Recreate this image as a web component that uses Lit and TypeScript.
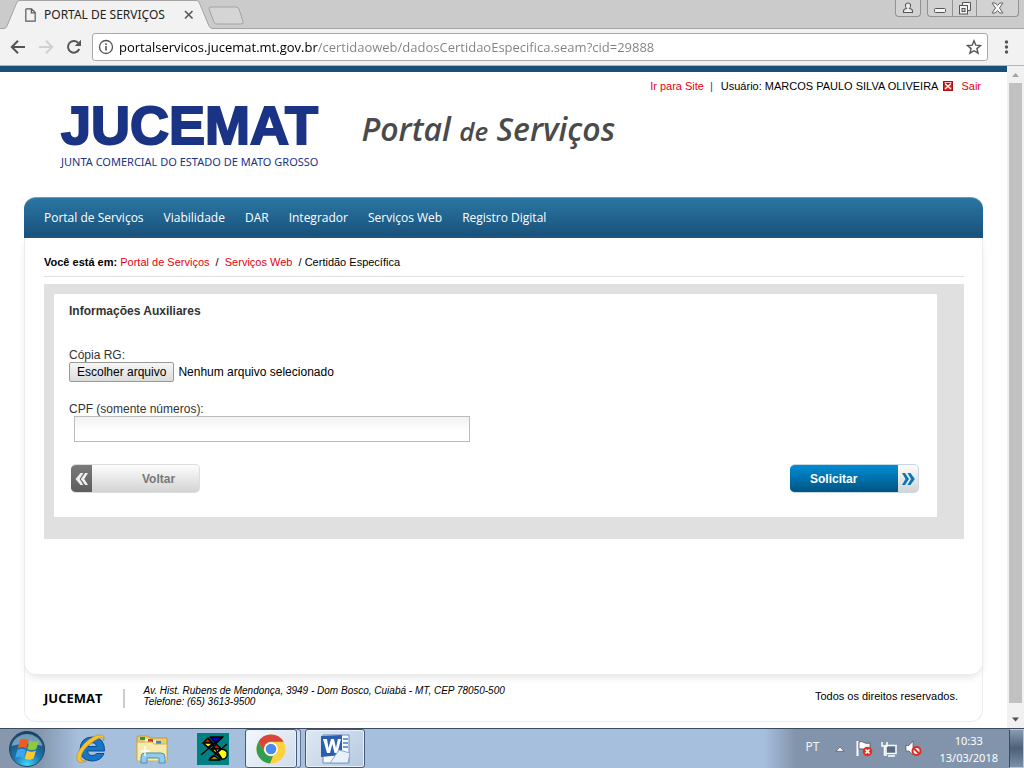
import { LitElement, html, css, svg } from "lit";
import { customElement, query, state } from "lit/decorators.js";

@customElement("browser-bar")
class BrowserBar extends LitElement {
  static styles = css`
    :host { display: block; font-family: "Open Sans", "Noto Sans", sans-serif; }
    button { border: 0; background: none; padding: 0; margin: 0; display: block; }
    svg { display: block; }
    .strip { height: 28px; background: #cbcbcb; border-bottom: 1px solid #a3a3a3; display: flex; justify-content: space-between; }
    .tabs { display: flex; }
    .tab { width: 212px; height: 29px; position: relative; display: flex; align-items: center; padding: 0 18px 0 25px; box-sizing: border-box; }
    .tab .shape { position: absolute; left: 0; top: 0; }
    .tab > * { position: relative; }
    .tab .name { font-size: 12px; line-height: 16px; color: #222; flex: 1; padding: 0 0 0 8px; white-space: nowrap; font-family: "Noto Sans", sans-serif; }
    .win { display: flex; padding-right: 5px; gap: 6px; }
    .group { display: flex; height: 16px; border: 1px solid #929292; border-top: 0; border-radius: 0 0 4px 4px; background: #d2d2d2; }
    .group button { height: 16px; width: 24px; display: flex; justify-content: center; align-items: center; }
    .group button + button { border-left: 1px solid #929292; }
    .group .wide { width: 42px; }
    .bar { height: 36px; background: #f2f2f2; border-bottom: 1px solid #b4b4b4; display: flex; align-items: center; padding: 0 15px 0 8px; gap: 8px; }
    .tools { display: flex; gap: 8px; }
    .menu { margin-left: 5px; }
    .omni { flex: 1; height: 26px; border: 1px solid #a9a9a9; border-radius: 3px; background: #fff; display: flex; align-items: center; padding: 0 5px; gap: 5px; }
    .url { flex: 1; min-width: 0; border: 0; outline: 0; padding: 0; height: 24px; font: 13px/24px "Open Sans", sans-serif; color: #111;
      background: linear-gradient(to right, #000 199px, #808080 199px); background-clip: text; -webkit-background-clip: text; -webkit-text-fill-color: transparent; }
  `;
  render() {
    return html`
      <div class="strip">
        <div class="tabs">
          <div class="tab">
            <svg class="shape" width="246" height="29" viewBox="0 0 246 29">
              <path d="M209 9 q-.5-2 2-2 h25 q2 0 3 2 l4 12.500 q1 2.500-2 2.500 h-24 q-2 0-3-2z" fill="#d5d5d5" stroke="#a3a3a3"/>
              <path d="M0 29 V28.500 H4 Q6 28.500 7 26 L17 2 Q18 .5 20 .5 H196 Q198 .5 199 2 L209 26 Q210 28.500 213 28.500 V29Z" fill="#f2f2f2"/>
              <path d="M0 28.500 H4 Q6 28.500 7 26 L17 2 Q18 .5 20 .5 H196 Q198 .5 199 2 L209 26 Q210 28.500 213 28.500" fill="none" stroke="#a3a3a3"/>
            </svg>
            <svg width="11" height="14" viewBox="0 0 11 14"><path d="M1 .8h5.500L10.200 4.500V13.200H.8V.8M6.300 1v3.800H10" fill="none" stroke="#5a5a5a" stroke-width="1.200"/></svg>
            <span class="name">PORTAL DE SERVIÇOS</span>
            <button aria-label="Fechar guia"><svg width="10" height="10" viewBox="0 0 10 10"><path d="M1 1l7.500 7.500M8.500 1L1 8.500" stroke="#5a5a5a" stroke-width="1.700"/></svg></button>
          </div>
        </div>
        <div class="win">
          <div class="group"><button aria-label="Perfil"><svg width="12" height="12" viewBox="0 0 12 12"><path d="M1.500 10.500V9q0-2 3-2.500Q3 4.500 3.500 2.500 4.300 1 6 1t2.500 1.500Q9 4.500 7.500 6.500q3 .5 3 2.500v1.500z" fill="#eee" stroke="#555" stroke-width="1.100"/></svg></button></div>
          <div class="group">
            <button aria-label="Minimizar"><svg width="12" height="12" viewBox="0 0 12 12"><rect x=".5" y="6.500" width="11" height="4" rx="1" fill="#f4f4f4" stroke="#555"/></svg></button>
            <button aria-label="Restaurar"><svg width="14" height="13" viewBox="0 0 14 13"><path d="M4.500 3V.5h8v8H10" fill="#f4f4f4" stroke="#555"/><rect x="1.500" y="3.500" width="8" height="8.500" fill="#f4f4f4" stroke="#555"/><rect x="4" y="6.500" width="3" height="3" fill="#d0d0d0" stroke="#555"/></svg></button>
            <button class="wide" aria-label="Fechar"><svg width="13" height="12" viewBox="0 0 13 12"><path d="M1 1h3.300L6.500 3.500 8.700 1H12L8.500 6 12 11H8.700L6.500 8.500 4.300 11H1L4.500 6z" fill="#f4f4f4" stroke="#666"/></svg></button>
          </div>
        </div>
      </div>
      <div class="bar">
        <div class="tools">
          <button aria-label="Voltar"><svg width="20" height="20" viewBox="0 0 20 20"><path d="M17 10H4M10 3.800L3.800 10 10 16.200" fill="none" stroke="#555" stroke-width="2"/></svg></button>
          <button aria-label="Avançar"><svg width="20" height="20" viewBox="0 0 20 20"><path d="M3 10h13M10 3.800L16.200 10 10 16.200" fill="none" stroke="#d0d0d0" stroke-width="2"/></svg></button>
          <button aria-label="Recarregar"><svg width="20" height="20" viewBox="0 0 20 20"><path d="M15.200 12A5.800 5.800 0 1 1 14 5.800" fill="none" stroke="#555" stroke-width="2"/><path d="M17 2.800V9h-6.200z" fill="#555"/></svg></button>
        </div>
        <div class="omni">
          <svg width="16" height="16" viewBox="0 0 16 16"><circle cx="8" cy="8" r="6.500" fill="none" stroke="#555" stroke-width="1.300"/><path d="M8 7v4.500M8 4.300v1.600" stroke="#555" stroke-width="1.600"/></svg>
          <input class="url" aria-label="Endereço" spellcheck="false" .value=${"portalservicos.jucemat.mt.gov.br/certidaoweb/dadosCertidaoEspecifica.seam?cid=29888"}>
          <button aria-label="Favoritos"><svg width="16" height="16" viewBox="0 0 16 16"><path d="M8 1.800l1.800 4.400 4.700.4-3.600 3 1.200 4.600L8 11.700l-4.100 2.500 1.200-4.600-3.600-3 4.700-.4z" fill="none" stroke="#555" stroke-width="1.400"/></svg></button>
        </div>
        <button class="menu" aria-label="Menu"><svg width="8" height="16" viewBox="0 0 8 16"><g fill="#555"><circle cx="5.500" cy="3" r="1.700"/><circle cx="5.500" cy="8" r="1.700"/><circle cx="5.500" cy="13" r="1.700"/></g></svg></button>
      </div>`;
  }
}

@customElement("portal-page")
class PortalPage extends LitElement {
  @state() fileName = "Nenhum arquivo selecionado";
  @query("#rg") fileInput!: HTMLInputElement;

  static styles = css`
    :host { display: flex; flex-direction: column; background: #fff; border-top: 6px solid #18507a; font-family: "Liberation Sans", Arial, sans-serif; color: #000; font-size: 11px; padding: 0 24px 6px; }
    a { color: #e60012; text-decoration: none; }
    header { height: 125px; }
    .session { display: flex; justify-content: flex-end; align-items: center; line-height: 14px; padding: 7px 2px 0 0; white-space: pre; }
    .pipe { color: #18507a; padding: 0 8px 0 6px; }
    .session svg { margin: 0 8px 0 5px; }
    .brand { display: flex; align-items: flex-start; padding: 2px 0 0 37px; gap: 43px; }
    .logo { color: #1a3384; }
    .logo b { display: block; font-size: 54px; line-height: 60px; -webkit-text-stroke: 2px #1a3384; }
    .logo span { display: block; font: 11px/14px "Noto Sans", sans-serif; white-space: nowrap; -webkit-text-stroke: 0; }
    h1 { margin: 0; padding-top: 12px; font: italic 600 32px/44px "Open Sans", sans-serif; color: #4a4a4a; white-space: nowrap; }
    h1 small { font-size: 26px; }
    nav { min-height: 40px; border-top: 1px solid #6d9dbb; border-radius: 12px 12px 0 0; background: linear-gradient(#2b76a3, #18507a); display: flex; align-items: center; gap: 20px; padding: 0 20px; }
    nav a { color: #fff; font: 12px/18px "Open Sans", sans-serif; }
    .body { flex: 1; border: solid #ececec; border-width: 0 1px 1px; border-radius: 0 0 12px 12px; padding: 17px 18px 0 19px; box-shadow: 0 4px 10px -3px #ddd; position: relative; background: #fff; }
    .crumbs { line-height: 14px; padding-bottom: 7px; border-bottom: 1px solid #e0e0e0; white-space: pre; }
    .box { margin-top: 7px; background: #e0e0e0; padding: 10px 27px 22px 10px; }
    form { background: #fff; padding: 9px 18px 24px 15px; font-size: 12px; line-height: 16px; color: #333; }
    h2 { font-size: 12px; line-height: 16px; margin: 0 0 29px; color: #333; }
    .field { display: block; line-height: 14px; }
    .file { display: flex; align-items: center; gap: 4px; color: #000; margin-bottom: 20px; }
    .file input { position: absolute; opacity: 0; width: 1px; height: 1px; }
    .file button { font: 12px/14px "Liberation Sans", sans-serif; color: #000; height: 20px; padding: 0 7px 1px; border: 1px solid #9a9a9a; border-radius: 2px; background: linear-gradient(#f6f6f6, #dcdcdc); }
    .cpf { display: block; box-sizing: border-box; margin-left: 5px; width: 396px; max-width: 100%; height: 26px; border: 1px solid #bbb; background: linear-gradient(#f2f2f2, #fff 60%); padding: 0 6px; font: 12px "Liberation Sans", sans-serif; outline: 0; }
    .actions { display: flex; justify-content: space-between; margin-top: 22px; padding-left: 2px; }
    .act { width: 129px; height: 29px; display: flex; align-items: stretch; padding: 0; border: 1px solid #ddd; border-radius: 5px; overflow: hidden; font: bold 12px "Liberation Sans", sans-serif; background: linear-gradient(#fdfdfd, #d3d3d3); }
    .act span { flex: 1; display: flex; align-items: center; }
    .act svg { display: block; }
    .back { color: #777; border-left-width: 0; }
    .back .ic { background: linear-gradient(#7b7b7b, #5c5c5c); flex: none; width: 21px; justify-content: center; margin: -1px 0; }
    .back .tx { padding-left: 50px; }
    .go { color: #fff; border-color: #c4d9e4; border-left: 0; }
    .go .tx { background: linear-gradient(#008fd9, #00527f); padding-left: 20px; margin: -1px 0; }
    .go .ic { flex: none; width: 20px; justify-content: center; }
    footer { border: 1px solid #ececec; border-top: 0; border-radius: 0 0 12px 12px; margin-top: -10px; padding: 23px 24px 13px 19px; display: flex; align-items: center; height: 20px; }
    footer strong { font: bold 13px/18px "Open Sans", sans-serif; }
    footer address { font-size: 10px; line-height: 11px; margin-left: 21px; padding: 0 0 4px 20px; position: relative; flex: 1; }
    footer address::before { content: ""; position: absolute; left: 0; top: 4px; width: 2px; height: 19px; background: #ccc; }
    footer p { margin: 0; padding-bottom: 4px; }
  `;
  pick() {
    const f = this.fileInput.files?.[0];
    this.fileName = f ? f.name : "Nenhum arquivo selecionado";
  }
  render() {
    const menu = ["Portal de Serviços", "Viabilidade", "DAR", "Integrador", "Serviços Web", "Registro Digital"];
    return html`
      <header>
        <div class="session"><a href="#">Ir para Site</a><span class="pipe">|</span><span>Usuário: MARCOS PAULO SILVA OLIVEIRA</span><svg width="10" height="10" viewBox="0 0 10 10"><rect width="10" height="10" fill="#a11"/><rect x="1" y="4" width="8" height="5" fill="#d22"/><path d="M2 2.500l6 5.500M8 2.500L2 8" stroke="#fff" stroke-width="1.400"/><path d="M1.500 1.500h7" stroke="#fbb"/></svg><a href="#">Sair</a></div>
        <div class="brand">
          <div class="logo"><b>JUCEMAT</b><span>JUNTA COMERCIAL DO ESTADO DE MATO GROSSO</span></div>
          <h1>Portal <small>de</small> Serviços</h1>
        </div>
      </header>
      <nav>${menu.map((m) => html`<a href="#">${m}</a>`)}</nav>
      <div class="body">
        <div class="crumbs"><b>Você está em:</b> <a href="#">Portal de Serviços</a>  /  <a href="#">Serviços Web</a>  / Certidão Específica</div>
        <div class="box">
          <form @submit=${(e: Event) => e.preventDefault()}>
            <h2>Informações Auxiliares</h2>
            <label class="field" for="rg">Cópia RG:</label>
            <div class="file">
              <input id="rg" type="file" tabindex="-1" @change=${this.pick}>
              <button type="button" @click=${() => this.fileInput.click()}>Escolher arquivo</button>
              <span>${this.fileName}</span>
            </div>
            <label class="field" for="cpf">CPF (somente números):</label>
            <input class="cpf" id="cpf" type="text" inputmode="numeric">
            <div class="actions">
              <button class="act back" type="button"><span class="ic"><svg width="13" height="12" viewBox="0 0 13 12"><path d="M5.500 0h2.800L4.600 6l3.700 6H5.500L.5 6zM10.200 0H13L9.300 6l3.700 6h-2.800L5.800 6z" fill="#eee"/></svg></span><span class="tx">Voltar</span></button>
              <button class="act go" type="submit"><span class="tx">Solicitar</span><span class="ic"><svg width="13" height="12" viewBox="0 0 13 12"><path d="M0 0h3l4 6-4 6H0l3.500-6zM5.500 0h3l4.300 6-4.300 6h-3L9 6z" fill="#0678b4"/></svg></span></button>
            </div>
          </form>
        </div>
      </div>
      <footer>
        <strong>JUCEMAT</strong>
        <address>Av. Hist. Rubens de Mendonça, 3949 - Dom Bosco, Cuiabá - MT, CEP 78050-500<br>Telefone: (65) 3613-9500</address>
        <p>Todos os direitos reservados.</p>
      </footer>`;
  }
}

const orb = svg`
  <defs><radialGradient id="o" cx=".5" cy=".95" r=".9"><stop offset="0" stop-color="#3fd8fb"/><stop offset=".45" stop-color="#1c78b0"/><stop offset="1" stop-color="#174468"/></radialGradient></defs>
  <circle cx="19" cy="19" r="17.500" fill="url(#o)" stroke="#26445f"/>
  <path d="M3.500 16a16 16 0 0 1 31 0q-15-5-31 0" fill="#cfe4f2" opacity=".5"/>
  <path d="M12 10q4-2.500 8.500 0l-2.300 8.500q-4-2.500-8.500 0z" fill="#ee5a24"/><path d="M21.500 10.500q4.500 2.500 9.500 0l-2.700 8.500q-4.500 2.500-9 0z" fill="#8fc73e"/>
  <path d="M9.300 20q4-2.500 8.500 0l-2.200 8q-4-2.500-8.300 0z" fill="#41a5ee"/><path d="M19 20.500q4.500 2.500 9 0l-2.500 8q-4.500 2.500-8.700 0z" fill="#fdc82f"/>`;

@customElement("task-bar")
class TaskBar extends LitElement {
  static styles = css`
    :host { display: flex; height: 39px; border-top: 1px solid #3c4a5c; justify-content: space-between; background: linear-gradient(to right, #8798ae 0, #8497ae 40px, #a6bfdd 78px, #a6bfdd calc(100% - 260px), #8294ab calc(100% - 228px)); font-family: "Noto Sans", sans-serif; color: #fff; }
    button { border: 0; background: none; padding: 0; margin: 0; display: block; }
    svg { display: block; }
    .apps, .tray { display: flex; align-items: center; }
    .orb { width: 38px; margin-left: 8px; }
    .app { width: 61px; height: 39px; display: flex; align-items: center; justify-content: center; }
    .ie { margin-left: 14px; }
    .on { box-sizing: border-box; border: 1px solid #445a76; border-radius: 3px; box-shadow: inset 0 0 0 1px #e8f0f8; background: linear-gradient(135deg, #dfe9f4, #b5c9e0); }
    .chrome { width: 52px; margin-left: 2px; background: linear-gradient(135deg, #f4f8fc, #cfdcec); }
    .stack { width: 4px; height: 39px; box-sizing: border-box; border: solid #5d738f; border-width: 1px 1px 1px 0; border-radius: 0 3px 3px 0; background: #d0dded; }
    .stack + .app { margin-left: 4px; width: 60px; }
    .lang { font-size: 12px; line-height: 16px; color: #eef2f6; padding: 0 16px 4px 0; }
    .icons { display: flex; gap: 8px; align-items: center; }
    .icons :first-child { margin-right: 3px; }
    .clock { font-size: 11px; line-height: 17px; text-align: center; padding: 0 11px 0 17px; }
    .peek { width: 15px; height: 39px; box-sizing: border-box; border: 1px solid #b9c6d4; border-left-color: #3c4a5c; background: linear-gradient(#8a9bb0, #4b5f78 50%, #7d90a8); }
  `;
  render() {
    return html`
      <div class="apps">
        <button class="orb" aria-label="Iniciar"><svg width="38" height="38" viewBox="0 0 38 38">${orb}</svg></button>
        <button class="app ie" aria-label="Internet Explorer"><svg width="32" height="32" viewBox="0 0 32 32">
          <path d="M29.500 18H12.500q.8 4.500 4.500 4.500 3 0 4.500-2h7.500Q26 28 17 28 5.500 27.500 5 16.500 5.500 4.500 17 4q13 .5 12.500 14zM12.700 13.500h9q-.6-4-4.500-4t-4.500 4z" fill="#1874c4" stroke="#0d4c92"/>
          <path d="M28.500 8q2-5-2-6Q19 1 9.500 10.500 -1 22 2.500 28q3 3 10-.5-7 1.500-6.500-3 1-7.500 9-13.500 8-6.500 12-6.500 2.500 .5 1.500 3.500z" fill="#f7c331" stroke="#b98713" stroke-width=".6"/></svg></button>
        <button class="app" aria-label="Explorador"><svg width="32" height="32" viewBox="0 0 32 32">
          <path d="M1 5q0-2 2-2h9l2 2h17v22H1z" fill="#e9cf72" stroke="#bf9a3d"/><path d="M4 4h5v3H4z" fill="#2a9a49"/><path d="M12 6h5v3h-5z" fill="#d23c2a"/><path d="M20 8h5v3h-5z" fill="#3a82d8"/>
          <path d="M9 6h3v3H9zM17 7h3v4h-3z" fill="#fff" opacity=".7"/><path d="M1 9h15l2 2h13v17H1z" fill="#f8eaa8" stroke="#cdb05a"/>
          <path d="M5 30v-6q0-4 4-4h16q4 0 4 4v6h-6v-5H11v5z" fill="#93cbea" stroke="#4b8fbf"/><path d="M9 13v10M4.500 18h9" stroke="#fff" stroke-width="1.300"/></svg></button>
        <button class="app" aria-label="Aplicativo"><svg width="32" height="32" viewBox="0 0 32 32">
          <rect width="32" height="32" fill="#008080"/><g stroke="#000" stroke-width="1.300" stroke-linejoin="round"><path d="M11 5l5 5H6z" fill="#e00"/><path d="M6 10h10l-5 4.500z" fill="#ff0"/><path d="M13 4h13l-7 6.500z" fill="#0000c8"/><path d="M19 11l5.500 5h-10z" fill="#e00"/><path d="M14.500 16h10L19 20z" fill="#ff0"/><path d="M19 20l5-4q4 0 6 3v4q-2 4-6 3z" fill="#ff0"/><path d="M12 27q2-4 6-4l5 4z" fill="#968a00"/><path d="M26 3L4 22M30 11L13 26M11 5l14 21M6 10l14 12" fill="none" stroke-width="1.500"/></g></svg></button>
        <button class="app on chrome" aria-label="Google Chrome"><svg width="30" height="30" viewBox="0 0 30 30">
          <circle cx="15" cy="15" r="14.500" fill="#fdd23e"/><path d="M2.400 7.800A14.500 14.500 0 0 1 27.600 7.800H15A7.200 7.200 0 0 0 8.800 18.600z" fill="#d8453a"/>
          <path d="M2.400 7.800L8.800 18.600A7.200 7.200 0 0 0 17 22L14 29.500A14.500 14.500 0 0 1 2.400 7.800z" fill="#2f9e54"/>
          <circle cx="15" cy="15" r="6.800" fill="#fff"/><circle cx="15" cy="15" r="5.300" fill="#4a8af0"/></svg></button>
        <span class="stack"></span>
        <button class="app on" aria-label="Word"><svg width="32" height="32" viewBox="0 0 32 32">
          <path d="M4 2h26v28H4z" fill="#f6f9fd" stroke="#6b8cbd"/><path d="M2 3l21-1v20L2 24z" fill="#2a5fb0"/><path d="M4 6h4l1.500 9L12 6h3l2 9 1.800-9H22l-3.500 14h-3L13.300 11 11 20H8z" fill="#fff"/>
          <path d="M24 6h5M24 10h5M24 14h5" stroke="#4a7cc0" stroke-width="1.500"/><path d="M20 17l11 3-2 10H11z" fill="#e8f0fa" stroke="#8ba6cb"/></svg></button>
      </div>
      <div class="tray">
        <span class="lang">PT</span>
        <div class="icons">
          <svg width="10" height="6" viewBox="0 0 10 6"><path d="M1 5.300L5 1l4 4.300z" fill="#fff" stroke="#444" stroke-width=".6"/></svg>
          <svg width="17" height="17" viewBox="0 0 17 17"><path d="M1.500 1v15" stroke="#fff" stroke-width="2"/><path d="M3 2q3-1 5 .5T14 3v7q-3 .5-5-.5T3 9z" fill="#fff" stroke="#444" stroke-width=".7"/><circle cx="11.500" cy="11.500" r="4.800" fill="#dd3322"/><path d="M9.500 9.500l4 4m0-4l-4 4" stroke="#fff" stroke-width="1.500"/></svg>
          <svg width="16" height="16" viewBox="0 0 16 16"><path d="M5 4.500h10v8H5z" fill="#5b6c80" stroke="#fff" stroke-width="1.500"/><path d="M7 15h7M1 1v4h5V1M3.500 5v9H6" fill="none" stroke="#fff" stroke-width="1.500"/></svg>
          <svg width="17" height="17" viewBox="0 0 17 17"><path d="M1 5.500h3L8 1v14l-4-4H1z" fill="#fff" stroke="#444" stroke-width=".6"/><circle cx="11.500" cy="11" r="4" fill="#fff" stroke="#dd2d22" stroke-width="2"/><path d="M9 8.500l5 5" stroke="#dd2d22" stroke-width="2"/></svg>
        </div>
        <div class="clock">10:33<br>13/03/2018</div>
        <button class="peek" aria-label="Mostrar área de trabalho"></button>
      </div>`;
  }
}

@customElement("app-root")
class AppRoot extends LitElement {
  static styles = css`
    :host { display: flex; flex-direction: column; min-height: 100vh; }
    .view { flex: 1; display: flex; }
    portal-page { flex: 1; min-width: 0; }
    .scroll { width: 17px; background: #f1f1f1; display: flex; flex-direction: column; align-items: center; }
    .scroll svg { display: block; }
    .thumb { flex: 1; width: 13px; background: #c1c1c1; margin-bottom: 8px; }
  `;
  render() {
    return html`
      <browser-bar></browser-bar>
      <div class="view">
        <portal-page></portal-page>
        <div class="scroll">
          <svg width="17" height="17" viewBox="0 0 17 17"><path d="M5 11l3.500-4L12 11z" fill="#a3a3a3"/></svg>
          <div class="thumb"></div>
          <svg width="17" height="17" viewBox="0 0 17 17"><path d="M5 6.500l3.500 4 3.500-4z" fill="#505050"/></svg>
        </div>
      </div>
      <task-bar></task-bar>`;
  }
}
